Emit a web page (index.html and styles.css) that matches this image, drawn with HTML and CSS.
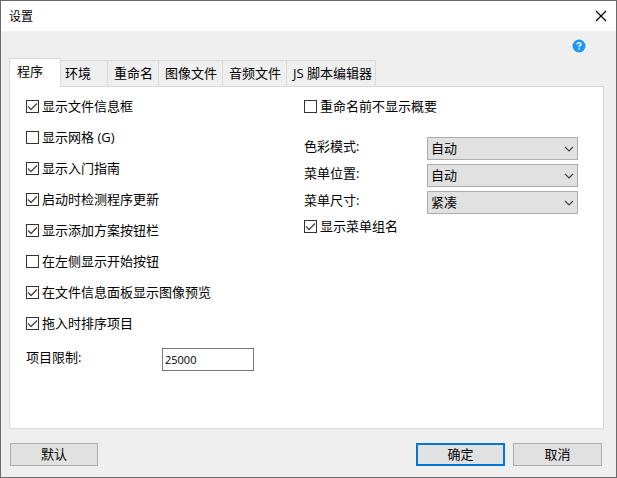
FILE: index.html
```html
<!DOCTYPE html>
<html lang="zh-CN">
<head>
  <meta charset="UTF-8" />
  <title>设置</title>
  <meta name="viewport" content="width=device-width, initial-scale=1" />
  <link rel="stylesheet" href="styles.css">
</head>
<body>
  <div class="dialog">
    <header class="titlebar">
      <h1>设置</h1>
      <button class="close" aria-label="关闭">
        <svg width="12" height="12" viewBox="0 0 12 12"><path d="M1 1l10 10M11 1L1 11" fill="none" stroke="#000" stroke-width="1.2"/></svg>
      </button>
    </header>

    <main class="content">
      <div class="toolbar">
        <button class="help" aria-label="帮助">
          <svg width="14" height="14" viewBox="0 0 14 14">
            <circle cx="7" cy="7" r="6.5" fill="#2196f3"/>
            <path d="M5.1 5.4C5.1 4.2 5.9 3.6 7 3.6s1.9.7 1.9 1.7c0 1.3-1.8 1.4-1.8 2.9" fill="none" stroke="#fff" stroke-width="1.4"/>
            <rect x="6.4" y="9.2" width="1.4" height="1.4" fill="#fff"/>
          </svg>
        </button>
      </div>

      <div class="tabs" role="tablist">
        <button class="tab active" role="tab" aria-selected="true">程序</button>
        <button class="tab wide" role="tab">环境</button>
        <button class="tab" role="tab">重命名</button>
        <button class="tab" role="tab">图像文件</button>
        <button class="tab" role="tab">音频文件</button>
        <button class="tab last" role="tab">JS 脚本编辑器</button>
      </div>

      <section class="panel" role="tabpanel">
        <div class="column">
          <label class="check"><input type="checkbox" checked />显示文件信息框</label>
          <label class="check"><input type="checkbox" />显示网格 (G)</label>
          <label class="check"><input type="checkbox" checked />显示入门指南</label>
          <label class="check"><input type="checkbox" checked />启动时检测程序更新</label>
          <label class="check"><input type="checkbox" checked />显示添加方案按钮栏</label>
          <label class="check"><input type="checkbox" />在左侧显示开始按钮</label>
          <label class="check"><input type="checkbox" checked />在文件信息面板显示图像预览</label>
          <label class="check"><input type="checkbox" checked />拖入时排序项目</label>
          <div class="limit">
            <label for="limit">项目限制:</label>
            <input type="text" id="limit" value="25000" />
          </div>
        </div>

        <div class="column">
          <label class="check"><input type="checkbox" />重命名前不显示概要</label>
          <div class="options">
            <label for="color">色彩模式:</label>
            <div class="select">
              <select id="color"><option>自动</option></select>
              <svg width="10" height="6" viewBox="0 0 10 6"><path d="M1 1l4 4 4-4" fill="none" stroke="#444" stroke-width="1.2"/></svg>
            </div>
            <label for="position">菜单位置:</label>
            <div class="select">
              <select id="position"><option>自动</option></select>
              <svg width="10" height="6" viewBox="0 0 10 6"><path d="M1 1l4 4 4-4" fill="none" stroke="#444" stroke-width="1.2"/></svg>
            </div>
            <label for="size">菜单尺寸:</label>
            <div class="select">
              <select id="size"><option>紧凑</option></select>
              <svg width="10" height="6" viewBox="0 0 10 6"><path d="M1 1l4 4 4-4" fill="none" stroke="#444" stroke-width="1.2"/></svg>
            </div>
          </div>
          <label class="check"><input type="checkbox" checked />显示菜单组名</label>
        </div>
      </section>
    </main>

    <footer class="actions">
      <button class="btn reset">默认</button>
      <button class="btn primary">确定</button>
      <button class="btn">取消</button>
    </footer>
  </div>
</body>
</html>
```

FILE: styles.css
```css
* {
  box-sizing: border-box;
}
body {
  margin: 0;
  color: #000;
}
body, button, input, select {
  font-family: "Open Sans", "Noto Sans CJK SC", sans-serif;
  font-size: 13px;
  line-height: 19px;
}
.dialog {
  display: flex;
  flex-direction: column;
  min-height: 100vh;
  background: #efefef;
  border: 1px solid #696969;
}
.titlebar {
  display: flex;
  justify-content: space-between;
  align-items: center;
  height: 30px;
  padding: 0 9px 0 8px;
  background: #fff;
}
h1 {
  margin: 0;
  font-size: 12px;
  font-weight: normal;
}
.close, .help {
  display: flex;
  padding: 0;
  border: none;
  background: none;
}
.content {
  flex: 1;
  display: flex;
  flex-direction: column;
  padding: 0 12px 0 8px;
}
.toolbar {
  display: flex;
  justify-content: flex-end;
  padding: 8px 18px 0 0;
  height: 27px;
}

/* tabs */
.tabs {
  display: flex;
  align-items: flex-end;
}
.tab {
  height: 26px;
  padding: 0 5px 0 6px;
  color: #000;
  background: #efefef;
  border: 1px solid #d9d9d9;
  border-width: 1px 0 0 1px;
}
.tab.wide {
  padding: 0 16px 0 4px;
  border-left: none;
}
.tab.last {
  padding: 0 3px 0 6px;
  border-right-width: 1px;
}
.tab.active {
  z-index: 1;
  height: 29px;
  margin-bottom: -1px;
  padding: 0 17px 4px 7px;
  background: #fff;
  border-right-width: 1px;
}
.panel {
  flex: 1;
  display: grid;
  grid-template-columns: 278px 1fr;
  padding: 10px 16px;
  background: #fff;
  border: 1px solid #d9d9d9;
}

/* form */
.column {
  display: flex;
  flex-direction: column;
  align-items: flex-start;
  gap: 12px;
}
.check {
  display: flex;
  align-items: center;
  gap: 3px;
}
.check input {
  appearance: none;
  width: 13px;
  height: 13px;
  margin: 0;
  background: #fff;
  border: 1px solid #333;
}
.check input:checked {
  background: url("data:image/svg+xml,%3Csvg xmlns='http://www.w3.org/2000/svg' viewBox='0 0 11 11'%3E%3Cpath d='M1 5.5l3 3 6-6' fill='none' stroke='%23444' stroke-width='1.3'/%3E%3C/svg%3E") center no-repeat;
}
.limit {
  display: grid;
  grid-template-columns: 136px 92px;
  margin-top: 3px;
}
.limit input {
  width: 100%;
  height: 23px;
  padding: 0 2px;
  font-size: 11px;
  border: 1px solid #7a7a7a;
}
.options {
  display: grid;
  grid-template-columns: 123px 151px;
  row-gap: 4px;
  margin: 9px 0 -9px;
}
.select {
  position: relative;
}
.select svg {
  position: absolute;
  top: 9px;
  right: 4px;
  pointer-events: none;
}
select {
  appearance: none;
  display: block;
  width: 100%;
  height: 23px;
  padding: 0 3px;
  color: #000;
  background: #e1e1e1;
  border: 1px solid #adadad;
  border-radius: 0;
}

/* buttons */
.actions {
  display: flex;
  gap: 8px;
  padding: 14px 14px 11px 9px;
}
.btn {
  width: 89px;
  height: 23px;
  padding: 0;
  color: #000;
  background: #e1e1e1;
  border: 1px solid #adadad;
}
.btn.primary {
  border: 2px solid #0078d7;
}
.reset {
  width: 88px;
  margin-right: auto;
}
```
